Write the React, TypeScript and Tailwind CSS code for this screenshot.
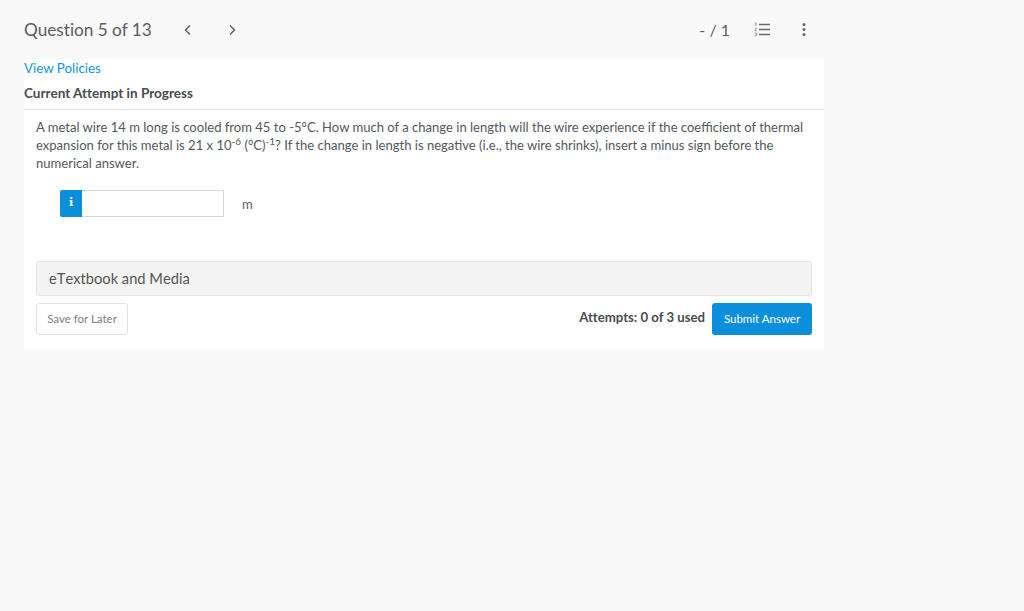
function NumberedList() {
  return (
    <svg width="17" height="15" viewBox="0 0 17 15" className="text-[#6b6b6b]">
      <path d="M5 2.5h11M5 7.5h11M5 12.5h11" stroke="currentColor" strokeWidth="1.4" fill="none" />
      <path d="M1.2 1l.8-.4V4M.8 6.2h1.8L.8 8.8h2M.8 11h1.9l-.9 1.3h.9v1.4H.8" stroke="currentColor" strokeWidth="0.6" fill="none" />
    </svg>
  )
}

function Dots() {
  return (
    <svg width="4" height="15" viewBox="0 0 4 15" className="text-[#666666]">
      <circle cx="2" cy="2.5" r="1.5" fill="currentColor" />
      <circle cx="2" cy="7.5" r="1.5" fill="currentColor" />
      <circle cx="2" cy="12.5" r="1.5" fill="currentColor" />
    </svg>
  )
}

function Chevron({ d }: { d: string }) {
  return (
    <svg width="8" height="12" viewBox="0 0 8 12" fill="none" stroke="#5f5f5f" strokeWidth="1.5">
      <path d={d} />
    </svg>
  )
}

export default function App() {
  return (
    <div className="min-h-[611px] bg-[#f9f9f9] font-['Lato','Open_Sans',sans-serif] text-[#454b50]">
      <header className="flex h-[59px] w-[824px] items-center pl-6">
        <h1 className="w-[160px] text-[17.2px] text-[#5c5c5c] [font-variant-ligatures:none]">Question 5 of 13</h1>
        <div className="flex w-[52px] items-center justify-between">
          <Chevron d="M6 1.5 1.5 6 6 10.5" />
          <Chevron d="M2 1.5 6.5 6 2 10.5" />
        </div>
        <div className="ml-auto flex items-center">
          <span className="text-[16px] text-[#5c5c5c]">- / 1</span>
          <span className="ml-[24px]"><NumberedList /></span>
          <span className="ml-[31px] mr-[18px]"><Dots /></span>
        </div>
      </header>

      <main className="ml-6 h-[290px] w-[800px] bg-white">
        <a className="block text-[13.35px] leading-[18px] text-[#0b97e0]">View Policies</a>
        <h2 className="mt-[7px] border-b border-[#e8e8e8] pb-[7px] text-[13.55px] font-bold leading-[18px] text-[#454c52] [font-variant-ligatures:none]">
          Current Attempt in Progress
        </h2>

        <div className="px-3">
          <p className="mt-2 text-[13.05px] leading-[18px] text-[#53585c]">
            A metal wire 14 m long is cooled from 45 to -5°C. How much of a change in length will the wire experience if the coefficient of thermal
            <br />
            expansion for this metal is 21 x 10<sup className="text-[10px]">-6</sup> (°C)<sup className="text-[10px]">-1</sup>? If the change in length is negative (i.e., the wire shrinks), insert a minus sign before the
            <br />
            numerical answer.
          </p>

          <div className="ml-6 mt-[18px] flex items-center">
            <div className="flex h-[27px] w-[22px] items-center justify-center rounded-l-[2px] bg-[#0b8fdd] font-['DejaVu_Serif',serif] text-[11px] font-bold text-white">
              i
            </div>
            <div className="h-[27px] w-[142px] border border-l-0 border-[#d6d6d6] bg-white" />
            <span className="ml-[18px] mt-[2px] text-[13px] text-[#5c5c5c]">m</span>
          </div>

          <div className="mt-11 flex h-[35px] items-center rounded-[3px] border border-[#e3e3e3] bg-[#f4f4f4] px-3 text-[14.7px] text-[#555555] [font-kerning:none]">
            eTextbook and Media
          </div>

          <div className="mt-[7px] flex items-center">
            <button className="h-8 w-[92px] rounded-[3px] border border-[#e2e2e2] bg-white text-[11.5px] text-[#808080]">
              Save for Later
            </button>
            <span className="mb-[2px] ml-auto mr-[7px] text-[13.2px] font-bold text-[#454c52] [font-variant-ligatures:none]">Attempts: 0 of 3 used</span>
            <button className="h-8 w-[100px] rounded-[3px] bg-[#0b8fdd] text-[11.5px] text-white">
              Submit Answer
            </button>
          </div>
        </div>
      </main>
    </div>
  )
}
